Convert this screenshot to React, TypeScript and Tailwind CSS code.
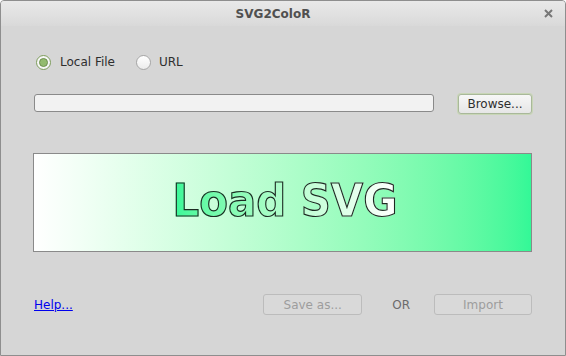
const RadioOn = () => (
  <span className="flex h-[15px] w-[15px] items-center justify-center rounded-full border border-[#7d9c5c] bg-[#f6f6f6]">
    <span className="h-[9px] w-[9px] rounded-full border border-[#6f9150] bg-[#93bb6f]" />
  </span>
);

const RadioOff = () => (
  <span className="block h-[15px] w-[15px] rounded-full border border-[#a6a6a6] bg-gradient-to-b from-white to-[#ececec]" />
);

const App = () => {
  return (
    <div
      className="flex h-[356px] w-[566px] flex-col overflow-hidden rounded-t-[4px] border border-[#8e8e8e] bg-[#d6d6d6] text-[12px] text-[#2e2e2e]"
      style={{ fontFamily: '"DejaVu Sans", sans-serif' }}
    >
      {/* Title bar */}
      <div className="relative flex h-[25px] shrink-0 items-center justify-center bg-gradient-to-b from-[#e9e9e9] to-[#d9d9d9] pr-[20px]">
        <span className="text-[12px] font-bold text-[#505050]">SVG2ColoR</span>
        <svg className="absolute right-[12px] top-[8px]" width="9" height="9" viewBox="0 0 9 9">
          <path d="M1 1 L8 8 M8 1 L1 8" stroke="#777" strokeWidth="2" />
        </svg>
      </div>

      <div className="flex flex-1 flex-col pl-[32px] pr-[33px]">
        {/* Source choice */}
        <div className="mt-[26px] flex h-[20px] items-center pl-[3px]">
          <RadioOn />
          <span className="ml-[9px]">Local File</span>
          <span className="ml-[21px]">
            <RadioOff />
          </span>
          <span className="ml-[8px]">URL</span>
        </div>

        {/* Path row */}
        <div className="mt-[22px] flex items-start">
          <div className="ml-[1px] h-[18px] w-[400px] rounded-[3px] border border-[#8a8a8a] bg-[#f2f2f2]" />
          <button className="ml-auto h-[20px] w-[74px] rounded-[3px] border border-[#a9b89a] bg-gradient-to-b from-[#f7f7f7] to-[#e6e6e6] text-[12px] leading-none text-[#2e2e2e] shadow-[0_0_0_1px_#c8d6b6]">
            Browse...
          </button>
        </div>

        {/* Preview */}
        <div className="mt-[39px] flex h-[99px] items-center justify-center border border-[#8a8a8a] bg-gradient-to-r from-white to-[#33f897]">
          <span className="mb-[5px] ml-[6px] inline-block bg-gradient-to-r from-[#33f897] to-white bg-clip-text text-[45px] font-bold leading-none text-transparent [transform:scaleX(0.93)] [-webkit-text-stroke:1.2px_#1c2a22]">
            Load SVG
          </span>
        </div>

        {/* Actions */}
        <div className="mt-[42px] flex items-center">
          <a href="#" className="ml-[1px] text-[#0000ee] underline">
            Help...
          </a>
          <button
            disabled
            className="ml-auto h-[21px] w-[99px] rounded-[3px] border border-[#bcbcbc] bg-[#d9d9d9] text-[12px] leading-none text-[#9d9d9d]"
          >
            Save as...
          </button>
          <span className="ml-[30px] mr-[24px] text-[#6b6b6b]">OR</span>
          <button
            disabled
            className="h-[21px] w-[98px] rounded-[3px] border border-[#bcbcbc] bg-[#d9d9d9] text-[12px] leading-none text-[#9d9d9d]"
          >
            Import
          </button>
        </div>
      </div>
    </div>
  );
};

export default App;
